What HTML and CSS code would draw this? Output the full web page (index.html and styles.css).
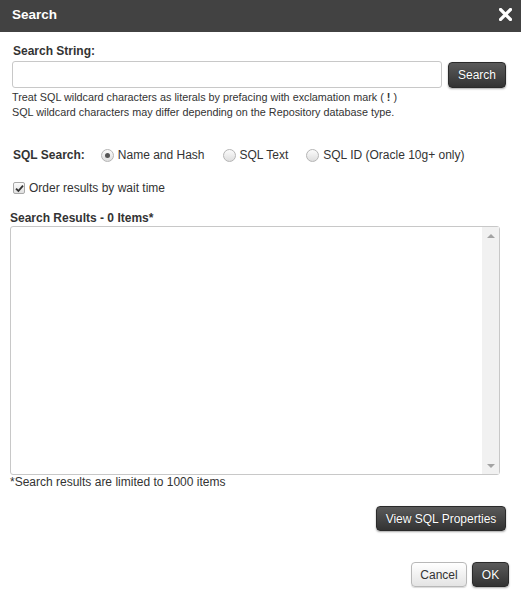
FILE: index.html
```html
<!DOCTYPE html>
<html>
<head>
<meta charset="utf-8">
<link rel="stylesheet" href="styles.css">
</head>
<body>
<div class="dialog">
  <div class="header">
    <span class="title">Search</span>
    <svg class="close" width="13" height="13" viewBox="0 0 13 13"><path d="M1.5 1.5 L11.5 11.5 M11.5 1.5 L1.5 11.5" stroke="#fff" stroke-width="3.2" stroke-linecap="square"/></svg>
  </div>
  <div class="body">
    <div class="label top-label">Search String:</div>
    <div class="search-row">
      <div class="input"></div>
      <button class="btn dark search-btn">Search</button>
    </div>
    <div class="help">
      <div>Treat SQL wildcard characters as literals by prefacing with exclamation mark ( <b>!</b> )</div>
      <div>SQL wildcard characters may differ depending on the Repository database type.</div>
    </div>
    <div class="radio-row">
      <span class="label">SQL Search:</span>
      <span class="opt"><span class="radio checked"></span>Name and Hash</span>
      <span class="opt"><span class="radio"></span>SQL Text</span>
      <span class="opt"><span class="radio"></span>SQL ID (Oracle 10g+ only)</span>
    </div>
    <div class="check-row">
      <span class="checkbox"><svg width="9" height="9" viewBox="0 0 9 9"><path d="M1 4.6 L3.4 7 L8 1.6" stroke="#333" stroke-width="1.8" fill="none"/></svg></span>
      <span>Order results by wait time</span>
    </div>
    <div class="results">
      <div class="label">Search Results - 0 Items*</div>
      <div class="list">
        <div class="list-content"></div>
        <div class="scrollbar">
          <span class="arrow up"></span>
          <span class="arrow down"></span>
        </div>
      </div>
      <div class="note">*Search results are limited to 1000 items</div>
    </div>
    <div class="props-row">
      <button class="btn dark props-btn">View SQL Properties</button>
    </div>
    <div class="footer">
      <button class="btn light cancel-btn">Cancel</button>
      <button class="btn dark ok-btn">OK</button>
    </div>
  </div>
</div>
</body>
</html>
```

FILE: styles.css
```css
html, body {
  margin: 0;
  padding: 0;
  background: #fff;
}
body {
  font-family: "Liberation Sans", Arial, sans-serif;
  font-size: 12px;
  color: #333;
  width: 521px;
  height: 595px;
  overflow: hidden;
}
.header {
  height: 32px;
  background: #424242;
  display: flex;
  align-items: center;
  justify-content: space-between;
  padding: 0 9px 0 12px;
}
.title {
  color: #fff;
  font-weight: bold;
  font-size: 13.5px;
  margin-top: -3px;
}
.close {
  display: block;
  margin-top: -4px;
}
.body {
  padding: 0 15px 0 12px;
}
.label {
  font-weight: bold;
  color: #333;
  font-size: 12px;
  line-height: 15px;
}
.top-label {
  margin-top: 12px;
  padding-left: 1px;
}
.search-row {
  display: flex;
  align-items: flex-start;
  gap: 6px;
  margin-top: 2px;
}
.input {
  width: 428px;
  height: 25px;
  border: 1px solid #c8c8c8;
  border-radius: 3px;
  background: #fff;
}
.btn {
  font-family: "Liberation Sans", Arial, sans-serif;
  font-size: 12px;
  border-radius: 4px;
  padding: 0;
  cursor: pointer;
}
.btn.dark {
  color: #fff;
  background: linear-gradient(#5a5a5a, #333);
  border: 1px solid #2a2a2a;
  text-shadow: 0 0 1px rgba(0,0,0,0.6);
  box-shadow: 0 1px 2px rgba(0,0,0,0.35);
}
.btn.light {
  color: #333;
  background: linear-gradient(#fff, #e4e4e4);
  border: 1px solid #b8b8b8;
  box-shadow: 0 1px 1px rgba(0,0,0,0.15);
}
.search-btn {
  width: 58px;
  height: 26px;
  margin-top: 1px;
}
.help {
  font-size: 10.8px;
  line-height: 15px;
  margin-top: 2px;
}
.help b {
  font-weight: bold;
}
.radio-row {
  display: flex;
  align-items: center;
  height: 20px;
  margin-top: 25px;
  padding-left: 1px;
}
.radio-row .label {
  margin-right: 16px;
}
.opt {
  display: flex;
  align-items: center;
  margin-right: 18px;
}
.radio {
  display: inline-block;
  box-sizing: border-box;
  width: 13px;
  height: 13px;
  border-radius: 50%;
  border: 1px solid #b5b5b5;
  background: linear-gradient(#fbfbfb, #dedede);
  margin-right: 4px;
  position: relative;
}
.radio.checked::after {
  content: "";
  position: absolute;
  left: 3px;
  top: 3px;
  width: 5px;
  height: 5px;
  border-radius: 50%;
  background: #555;
}
.check-row {
  display: flex;
  align-items: center;
  height: 20px;
  margin-top: 13px;
  padding-left: 1px;
}
.checkbox {
  box-sizing: border-box;
  width: 12px;
  height: 12px;
  border: 1px solid #a8a8a8;
  border-radius: 2px;
  background: linear-gradient(#fbfbfb, #e0e0e0);
  display: flex;
  align-items: center;
  justify-content: center;
  margin-right: 4px;
}
.checkbox svg {
  display: block;
}
.results {
  margin-left: -2px;
  margin-top: 13px;
}
.list {
  margin-top: 0px;
  width: 488px;
  height: 247px;
  border: 1px solid #c8c8c8;
  border-radius: 3px;
  display: flex;
}
.list-content {
  flex: 1;
}
.scrollbar {
  width: 17px;
  background: #f1f1f1;
  display: flex;
  flex-direction: column;
  justify-content: space-between;
  align-items: center;
  padding: 7px 0 6px;
}
.arrow {
  width: 0;
  height: 0;
  border-left: 4px solid transparent;
  border-right: 4px solid transparent;
}
.arrow.up {
  border-bottom: 4px solid #a3a3a3;
}
.arrow.down {
  border-top: 4px solid #a3a3a3;
}
.note {
  line-height: 15px;
}
.props-row {
  display: flex;
  justify-content: flex-end;
  margin-top: 16px;
}
.props-btn {
  width: 130px;
  height: 25px;
}
.footer {
  display: flex;
  justify-content: flex-end;
  gap: 5px;
  margin-top: 31px;
  margin-right: -3px;
}
.cancel-btn {
  width: 56px;
  height: 25px;
}
.ok-btn {
  width: 37px;
  height: 25px;
}
```
